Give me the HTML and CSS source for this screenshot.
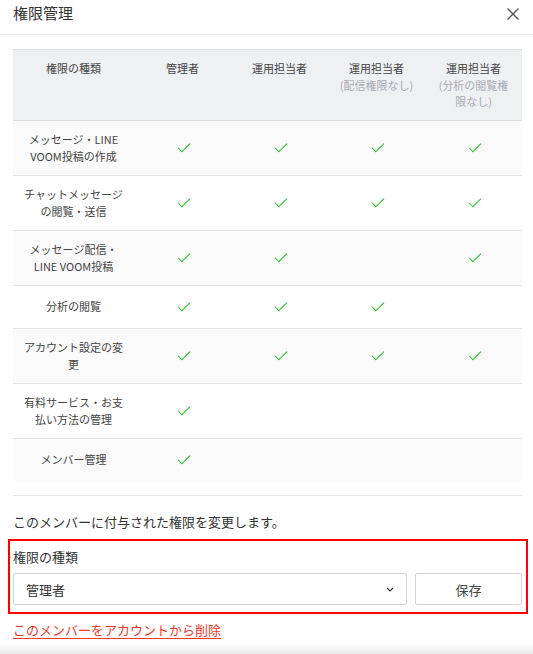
FILE: index.html
```html
<!DOCTYPE html>
<html lang="ja">
<head>
<meta charset="utf-8">
<title>権限管理</title>
<link rel="stylesheet" href="styles.css">
</head>
<body>
<div class="modal">
  <header class="modal-head">
    <h1 class="modal-title">権限管理</h1>
    <button class="close" aria-label="閉じる">
      <svg width="12" height="12" viewBox="0 0 12 12"><path d="M0.5 0.5 L11.5 11.5 M11.5 0.5 L0.5 11.5" stroke="#555" stroke-width="1.3" fill="none"/></svg>
    </button>
  </header>
  <main class="modal-body">
    <table class="perm">
      <colgroup>
        <col class="c-first"><col class="c-role"><col class="c-role"><col class="c-role"><col class="c-role">
      </colgroup>
      <thead>
        <tr>
          <th>権限の種類</th>
          <th>管理者</th>
          <th>運用担当者</th>
          <th>運用担当者<span class="sub">(配信権限なし)</span></th>
          <th>運用担当者<span class="sub">(分析の閲覧権<br>限なし)</span></th>
        </tr>
      </thead>
      <tbody>
        <tr><td>メッセージ・LINE<br>VOOM投稿の作成</td><td class="ok"><i></i></td><td class="ok"><i></i></td><td class="ok"><i></i></td><td class="ok"><i></i></td></tr>
        <tr><td>チャットメッセージ<br>の閲覧・送信</td><td class="ok"><i></i></td><td class="ok"><i></i></td><td class="ok"><i></i></td><td class="ok"><i></i></td></tr>
        <tr><td>メッセージ配信・<br>LINE VOOM投稿</td><td class="ok"><i></i></td><td class="ok"><i></i></td><td></td><td class="ok"><i></i></td></tr>
        <tr><td>分析の閲覧</td><td class="ok"><i></i></td><td class="ok"><i></i></td><td class="ok"><i></i></td><td></td></tr>
        <tr><td>アカウント設定の変<br>更</td><td class="ok"><i></i></td><td class="ok"><i></i></td><td class="ok"><i></i></td><td class="ok"><i></i></td></tr>
        <tr><td>有料サービス・お支<br>払い方法の管理</td><td class="ok"><i></i></td><td></td><td></td><td></td></tr>
        <tr><td>メンバー管理</td><td class="ok"><i></i></td><td></td><td></td><td></td></tr>
      </tbody>
    </table>
    <hr class="sep">
    <p class="desc">このメンバーに付与された権限を変更します。</p>
    <div class="edit-box">
      <label class="field-label" for="role">権限の種類</label>
      <div class="field-row">
        <div class="select" id="role">
          <span>管理者</span>
          <svg width="8" height="5" viewBox="0 0 8 5"><path d="M1 1 L4 4 L7 1" stroke="#333" stroke-width="1.2" fill="none"/></svg>
        </div>
        <button class="save">保存</button>
      </div>
    </div>
    <a class="remove" href="#">このメンバーをアカウントから削除</a>
  </main>
  <div class="fade"></div>
</div>
</body>
</html>
```

FILE: styles.css
```css
* { box-sizing: border-box; }
html, body { margin: 0; padding: 0; background: #fff; }
body {
  font-family: "Noto Sans CJK JP", "Noto Sans", sans-serif;
  color: #333;
  width: 533px;
  height: 654px;
  overflow: hidden;
}
.modal { position: relative; height: 654px; }
.modal-head {
  height: 35px;
  border-bottom: 1px solid #ececec;
  display: flex;
  align-items: center;
  justify-content: space-between;
  padding: 0 13px 0 13px;
}
.modal-title {
  margin: 0;
  font-size: 15px;
  font-weight: 400;
  line-height: 20px;
  color: #333;
  position: relative;
  top: -4px;
}
.close {
  border: 0;
  background: none;
  padding: 0;
  width: 12px;
  height: 12px;
  display: flex;
  position: relative;
  top: -3px;
  right: 1px;
}
.modal-body { padding: 14px 11px 0 13px; }
.perm {
  width: 509px;
  border-collapse: collapse;
  table-layout: fixed;
  font-size: 11px;
}
.c-first { width: 121px; }
.c-role { width: 97px; }
.perm th {
  background: #eff0f2;
  border-top: 1px solid #dcdde1;
  border-bottom: 1px solid #dcdde1;
  font-weight: 400;
  color: #444;
  vertical-align: top;
  padding: 10px 4px 10px;
  line-height: 16.5px;
  text-align: center;
}
.perm th .sub { display: block; color: #a7abb2; }
.perm td {
  border-bottom: 1px solid #e3e4e8;
  text-align: center;
  vertical-align: middle;
  padding: 10px 4px 10px;
  line-height: 17px;
  height: 43px;
  color: #444;
}
.perm tbody tr:nth-child(odd) td { background: #fafafa; }
.perm tbody tr:last-child td { border-bottom: 0; }
.perm td.ok i {
  display: inline-block;
  width: 12px;
  height: 6px;
  border-left: 1.4px solid #0cc70c;
  border-bottom: 1.4px solid #0cc70c;
  transform: rotate(-45deg);
  position: relative;
  top: -3px;
  left: 1px;
}
.sep {
  margin: 14px 0 0;
  border: 0;
  border-top: 1px solid #e6e6e6;
  width: 509px;
}
.desc {
  margin: 16px 0 0;
  font-size: 13px;
  line-height: 20px;
  color: #333;
}
.edit-box {
  margin: 7px -6px 0 -5px;
  border: 2px solid #f00;
  padding: 6px 4px 7px 3px;
}
.field-label {
  display: block;
  font-size: 13px;
  line-height: 20px;
  color: #333;
}
.field-row {
  display: flex;
  gap: 8px;
  margin-top: 6px;
}
.select {
  width: 394px;
  height: 32px;
  border: 1px solid #d4d4d4;
  border-radius: 2px;
  display: flex;
  align-items: center;
  justify-content: space-between;
  padding: 0 12px 0 12px;
  font-size: 13px;
  color: #333;
}
.save {
  width: 107px;
  height: 32px;
  border: 1px solid #d4d4d4;
  border-radius: 2px;
  background: #fff;
  font-family: inherit;
  font-size: 13px;
  color: #444;
  padding: 0;
}
.remove {
  display: inline-block;
  margin-top: 6px;
  font-size: 13px;
  line-height: 20px;
  color: #f5372a;
  text-decoration: underline;
  text-underline-offset: 3px;
}
.fade {
  position: absolute;
  left: 0;
  right: 0;
  bottom: 0;
  height: 12px;
  background: linear-gradient(rgba(255,255,255,0), #ebebeb);
}
```
